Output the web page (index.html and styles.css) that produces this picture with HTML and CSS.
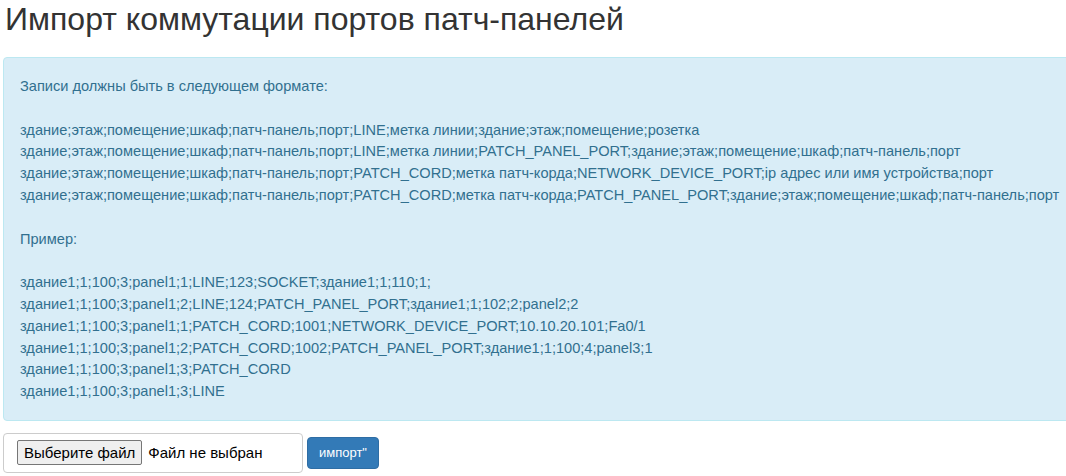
FILE: index.html
```html
<!DOCTYPE html>
<html lang="ru">
<head>
    <meta charset="utf-8">
    <title>Импорт коммутации портов патч-панелей</title>
    <link rel="stylesheet" href="styles.css">
</head>
<body>
    <div class="page">
        <h1>Импорт коммутации портов патч-панелей</h1>

        <div class="alert alert-info">
            Записи должны быть в следующем формате:<br>
            <br>
            здание;этаж;помещение;шкаф;патч-панель;порт;LINE;метка линии;здание;этаж;помещение;розетка<br>
            здание;этаж;помещение;шкаф;патч-панель;порт;LINE;метка линии;PATCH_PANEL_PORT;здание;этаж;помещение;шкаф;патч-панель;порт<br>
            здание;этаж;помещение;шкаф;патч-панель;порт;PATCH_CORD;метка патч-корда;NETWORK_DEVICE_PORT;ip адрес или имя устройства;порт<br>
            здание;этаж;помещение;шкаф;патч-панель;порт;PATCH_CORD;метка патч-корда;PATCH_PANEL_PORT;здание;этаж;помещение;шкаф;патч-панель;порт<br>
            <br>
            Пример:<br>
            <br>
            здание1;1;100;3;panel1;1;LINE;123;SOCKET;здание1;1;110;1;<br>
            здание1;1;100;3;panel1;2;LINE;124;PATCH_PANEL_PORT;здание1;1;102;2;panel2;2<br>
            здание1;1;100;3;panel1;1;PATCH_CORD;1001;NETWORK_DEVICE_PORT;10.10.20.101;Fa0/1<br>
            здание1;1;100;3;panel1;2;PATCH_CORD;1002;PATCH_PANEL_PORT;здание1;1;100;4;panel3;1<br>
            здание1;1;100;3;panel1;3;PATCH_CORD<br>
            здание1;1;100;3;panel1;3;LINE
        </div>

        <form class="import-form">
            <div class="form-control file-field">
                <label class="file-btn" for="file">Выберите файл</label>
                <span class="file-name">Файл не выбран</span>
                <input type="file" id="file" class="file-hidden">
            </div>
            <button type="submit" class="btn btn-primary">импорт"</button>
        </form>
    </div>
</body>
</html>
```

FILE: styles.css
```css
html {
    overflow: hidden;
}

body {
    margin: 0;
    padding: 0;
    background: #fff;
    color: #333;
    font-family: 'Liberation Sans', Arial, sans-serif;
    font-size: 14.6px;
    line-height: 21.8px;
}

.page {
    padding: 0 3px;
}

h1 {
    font-size: 32px;
    font-weight: normal;
    line-height: 39px;
    margin: 0 0 18px 2px;
    color: #333;
}

.alert {
    padding: 18px 16px 17px;
    border: 1px solid transparent;
    border-radius: 4px;
    white-space: nowrap;
    width: max-content;
    min-width: 100%;
}

.alert-info {
    background-color: #d9edf7;
    border-color: #bce8f1;
    color: #31708f;
}

.import-form {
    display: flex;
    align-items: center;
    gap: 4px;
    margin-top: 12px;
}

.form-control {
    border: 1px solid #ccc;
    border-radius: 4px;
    background: #fff;
}

.file-field {
    display: flex;
    align-items: center;
    width: 285px;
    height: 38px;
    padding: 0 0 0 13px;
}

.file-btn {
    display: inline-block;
    box-sizing: border-box;
    height: 25px;
    padding: 0 6px;
    border: 1px solid #767676;
    border-radius: 2px;
    background: #efefef;
    color: #000;
    font-size: 15px;
    line-height: 23px;
}

.file-name {
    margin-left: 6px;
    color: #000;
    font-size: 15px;
}

.file-hidden {
    display: none;
}

.btn {
    height: 32px;
    padding: 0 11px;
    border: 1px solid transparent;
    border-radius: 4px;
    font-family: inherit;
    font-size: 13px;
    cursor: pointer;
}

.btn-primary {
    background-color: #337ab7;
    border-color: #2e6da4;
    color: #fff;
}
```
